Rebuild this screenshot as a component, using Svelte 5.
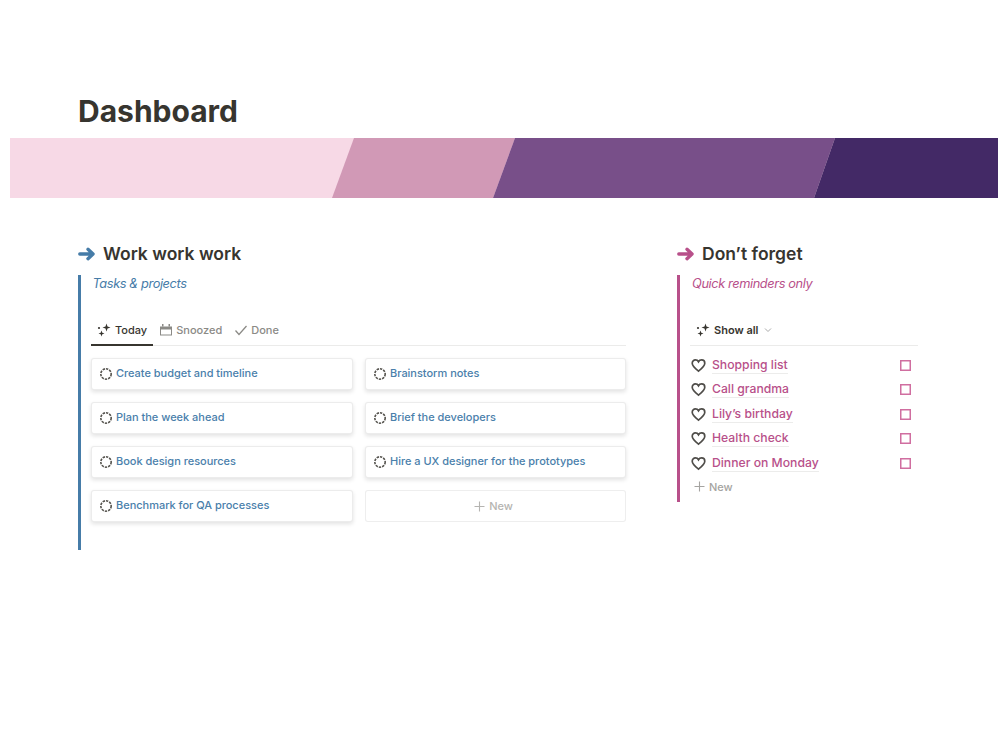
<script>
  const left = ['Create budget and timeline','Brainstorm notes','Plan the week ahead','Brief the developers','Book design resources','Hire a UX designer for the prototypes','Benchmark for QA processes'];
  const rem = ['Shopping list','Call grandma',"Lily’s birthday",'Health check','Dinner on Monday'];
</script>

{#snippet arrow(color)}
  <svg class="arrow" viewBox="0 0 18 14" width="18" height="14"><path d="M1.800 7H14M10 2.300L15 7l-5 4.700" fill="none" stroke={color} stroke-width="3.400" stroke-linecap="round" stroke-linejoin="round"/></svg>
{/snippet}
{#snippet sparkle()}
  <svg class="ic" viewBox="0 0 14 14" width="14" height="14" fill="#37352f"><path d="M9.500 .5l1 3 3 1-3 1-1 3-1-3-3-1 3-1z"/><path d="M4.500 7.500l.8 2.200 2.200.8-2.200.8-.8 2.200-.8-2.200-2.200-.8 2.200-.8z"/><circle cx="2" cy="5" r="1.100"/></svg>
{/snippet}
{#snippet plus(color)}
  <svg class="plus" viewBox="0 0 11 11" width="11" height="11"><path d="M5.500 .5v10M.5 5.500h10" fill="none" stroke={color} stroke-width="1.100"/></svg>
{/snippet}

<main class="page">
  <h1>Dashboard</h1>
  <svg class="banner" viewBox="0 0 988 60" width="988" height="60" preserveAspectRatio="none">
    <rect width="988" height="60" fill="#f7d9e6"/>
    <polygon points="344,0 505,0 483,60 322,60" fill="#d199b6"/>
    <polygon points="505,0 825,0 804,60 483,60" fill="#784f89"/>
    <polygon points="825,0 988,0 988,60 804,60" fill="#432966"/>
  </svg>

  <div class="cols">
    <section class="col left">
      <h2>{@render arrow('#467ca8')}<span>Work work work</span></h2>
      <div class="body blue">
        <p class="sub">Tasks &amp; projects</p>
        <div class="tabs">
          <div class="tab active">{@render sparkle()}Today</div>
          <div class="tab"><svg class="ic" viewBox="0 0 14 14" width="14" height="14"><path d="M1 3.500h12V12.500H1z" fill="#8b8a86"/><rect x="2" y="6.500" width="10" height="5" fill="#fff"/><rect x="3" y="1" width="1.500" height="2.500" fill="#8b8a86"/><rect x="9.500" y="1" width="1.500" height="2.500" fill="#8b8a86"/></svg>Snoozed</div>
          <div class="tab"><svg class="ic" viewBox="0 0 14 14" width="14" height="14"><path d="M1.500 7.500l3.500 4L12.500 3" fill="none" stroke="#8b8a86" stroke-width="1.300"/></svg>Done</div>
        </div>
        <div class="grid">
          {#each left as t}
            <div class="card">
              <svg class="ring" viewBox="0 0 14 14" width="14" height="14"><circle cx="7" cy="7" r="5.200" fill="none" stroke="#55534e" stroke-width="1.600" stroke-dasharray="2.400 1"/></svg>
              <span>{t}</span>
            </div>
          {/each}
          <div class="card new">{@render plus('#b5b4b1')}New</div>
        </div>
      </div>
    </section>

    <section class="col right">
      <h2>{@render arrow('#b8508a')}<span>Don’t forget</span></h2>
      <div class="body pink">
        <p class="sub">Quick reminders only</p>
        <div class="tabs solo">
          <div class="tab active">{@render sparkle()}Show all<svg class="chev" viewBox="0 0 8 8" width="8" height="8"><path d="M1 2.500l3 3 3-3" fill="none" stroke="#aaa" stroke-width="1"/></svg></div>
        </div>
        <ul>
          {#each rem as t}
            <li>
              <svg class="heart" viewBox="0 0 16 16" width="15" height="15"><path d="M8 14C4 10.800 1.300 8.500 1.300 5.500 1.300 3.400 2.900 2 4.700 2 6 2 7.300 2.700 8 4c.7-1.300 2-2 3.300-2 1.800 0 3.400 1.400 3.400 3.500C14.700 8.500 12 10.800 8 14z" fill="none" stroke="#4f4d49" stroke-width="1.800"/></svg>
              <span class="link">{t}</span>
              <svg class="box" viewBox="0 0 11 11" width="11" height="11"><rect x=".75" y=".75" width="9.500" height="9.500" fill="none" stroke="#d06ea0" stroke-width="1.500"/></svg>
            </li>
          {/each}
        </ul>
        <div class="addrow">{@render plus('#a5a4a1')}New</div>
      </div>
    </section>
  </div>
</main>

<style>
  :global(body) { margin: 0; background: #fff; }
  .page { width: 1005px; height: 737px; box-sizing: border-box; padding-top: 93px; font-family: Inter, "Liberation Sans", sans-serif; color: #37352f; overflow: hidden; }
  h1 { margin: 0 0 9px 78px; font-size: 30px; line-height: 36px; font-weight: 700; }
  .banner { display: block; margin-left: 10px; }
  .cols { display: flex; margin: 44px 0 0 78px; gap: 51px; align-items: flex-start; }
  .left { width: 548px; }
  .right { width: 241px; }
  h2 { margin: 0; display: flex; align-items: center; gap: 7px; font-size: 17.500px; line-height: 24px; font-weight: 600; height: 24px; padding-bottom: 9px; }
  .arrow { flex: none; }
  .body { padding-left: 10px; }
  .blue { border-left: 3px solid #467ca8; height: 275px; color: #467ca8; }
  .pink { border-left: 3px solid #b8508a; height: 227px; color: #b8508a; }
  .sub { margin: 0 0 0 2px; font-style: italic; font-size: 12.800px; letter-spacing: -.4px; line-height: 18px; }
  .blue .sub { margin-left: 1.500px; }
  .tabs { display: flex; margin-top: 22px; border-bottom: 1px solid #ebebea; height: 30px; }
  .tab { display: flex; align-items: center; gap: 3px; font-size: 11px; font-weight: 500; color: #8b8a86; padding: 0 6px; height: 30px; box-sizing: border-box; }
  .tab.active { color: #37352f; border-bottom: 2px solid #37352f; height: 31px; gap: 4px; }
  .solo .tab.active { border-bottom: 0; height: 30px; font-weight: 600; }
  .chev { margin-left: 1px; }
  .ic { flex: none; }
  .grid { display: grid; grid-template-columns: 262px 261px; column-gap: 12px; row-gap: 12px; margin-top: 12px; }
  .card { height: 32px; box-sizing: border-box; background: #fff; border: 1px solid rgba(15,15,15,.08); border-radius: 3px; box-shadow: 0 2px 4px rgba(15,15,15,.12); display: flex; align-items: flex-start; gap: 3px; padding: 6px 7px; font-size: 11px; letter-spacing: -.02px; font-weight: 500; color: #4a80ab; line-height: 16px; }
  .ring { margin-top: 2px; flex: none; }
  .card.new { box-shadow: none; border-color: rgba(15,15,15,.07); color: #b5b4b1; justify-content: center; align-items: center; padding: 0 4px 0 0; gap: 4px; }
  .plus { flex: none; }
  ul { list-style: none; margin: 7px 0 0; padding: 0; }
  li { display: flex; align-items: center; height: 24.500px; font-size: 12.200px; font-weight: 500; padding-left: 1px; }
  .heart { flex: none; margin-right: 6px; }
  .link { border-bottom: 1px solid #ececeb; line-height: 16px; }
  .box { margin-left: auto; flex: none; margin-right: 7px; }
  .addrow { display: flex; align-items: center; gap: 4px; height: 22px; font-size: 11px; font-weight: 500; color: #a5a4a1; padding-left: 4px; }
</style>
